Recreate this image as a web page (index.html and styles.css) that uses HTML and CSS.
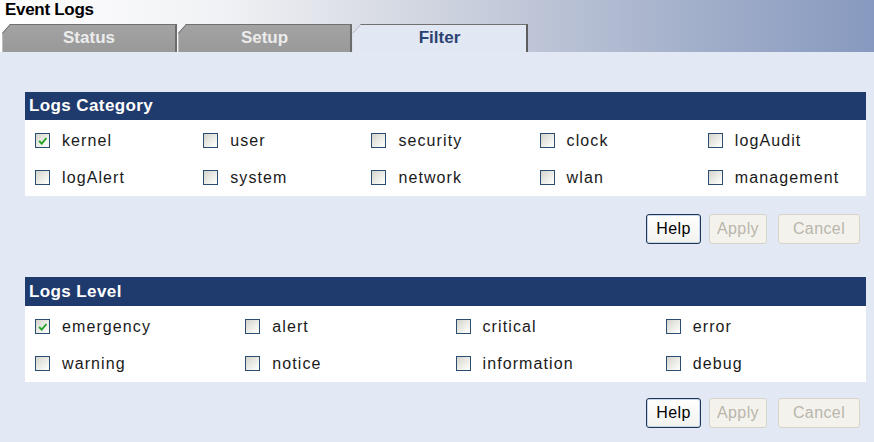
FILE: index.html
```html
<!DOCTYPE html>
<html>
<head>
<meta charset="utf-8">
<title>Event Logs</title>
<link rel="stylesheet" href="styles.css">
</head>
<body>
<header class="header">
  <div class="title">Event Logs</div>
  <nav class="tabs">
    <div class="tab">Status</div>
    <div class="tab tab-mid">Setup</div>
    <div class="tab active">Filter</div>
  </nav>
</header>
<main class="content">
  <section class="panel">
    <div class="panel-head">Logs Category</div>
    <div class="panel-body cols5">
      <label class="opt"><span class="cb checked"><svg viewBox="0 0 14 14" width="12" height="12"><path d="M2.5 7 L5.5 10 L11 3.5" fill="none" stroke="#23a323" stroke-width="2.2"/></svg></span>kernel</label>
      <label class="opt"><span class="cb"></span>user</label>
      <label class="opt"><span class="cb"></span>security</label>
      <label class="opt"><span class="cb"></span>clock</label>
      <label class="opt"><span class="cb"></span>logAudit</label>
      <label class="opt"><span class="cb"></span>logAlert</label>
      <label class="opt"><span class="cb"></span>system</label>
      <label class="opt"><span class="cb"></span>network</label>
      <label class="opt"><span class="cb"></span>wlan</label>
      <label class="opt"><span class="cb"></span>management</label>
    </div>
  </section>
  <div class="actions">
    <button class="btn">Help</button>
    <button class="btn disabled">Apply</button>
    <button class="btn disabled cancel">Cancel</button>
  </div>

  <section class="panel panel-second">
    <div class="panel-head">Logs Level</div>
    <div class="panel-body cols4">
      <label class="opt"><span class="cb checked"><svg viewBox="0 0 14 14" width="12" height="12"><path d="M2.5 7 L5.5 10 L11 3.5" fill="none" stroke="#23a323" stroke-width="2.2"/></svg></span>emergency</label>
      <label class="opt"><span class="cb"></span>alert</label>
      <label class="opt"><span class="cb"></span>critical</label>
      <label class="opt"><span class="cb"></span>error</label>
      <label class="opt"><span class="cb"></span>warning</label>
      <label class="opt"><span class="cb"></span>notice</label>
      <label class="opt"><span class="cb"></span>information</label>
      <label class="opt"><span class="cb"></span>debug</label>
    </div>
  </section>
  <div class="actions">
    <button class="btn">Help</button>
    <button class="btn disabled">Apply</button>
    <button class="btn disabled cancel">Cancel</button>
  </div>
</main>
</body>
</html>
```

FILE: styles.css
```css
html, body {
  margin: 0;
  padding: 0;
}
body {
  width: 874px;
  height: 442px;
  overflow: hidden;
  background: #e3e9f4;
  font-family: "Liberation Sans", Arial, sans-serif;
  color: #000;
}
.header {
  height: 52px;
  background: linear-gradient(to right, #ffffff 0%, #f1f2f5 25%, #d6dae3 45%, #bcc4d6 62%, #a2afca 80%, #8799bf 100%);
}
.title {
  height: 24px;
  box-sizing: border-box;
  padding: 0 0 0 5px;
  font-size: 17px;
  line-height: 20px;
  font-weight: bold;
  letter-spacing: -0.3px;
}
.tabs {
  display: flex;
  gap: 1px;
  padding-left: 2px;
  height: 28px;
}
.tab {
  position: relative;
  width: 175px;
  height: 28px;
  box-sizing: border-box;
  background: linear-gradient(to bottom, #a3a3a3, #999999);
  border-top: 1px solid #707070;
  border-right: 2px solid #6c6c6c;
  border-left: 1px solid #bdbdbd;
  clip-path: polygon(8px 0, 100% 0, 100% 100%, 0 100%, 0 9px);
  color: #ececec;
  font-size: 17px;
  font-weight: bold;
  line-height: 25px;
  text-align: center;
}
.tab::before {
  content: "";
  position: absolute;
  left: -3px;
  top: 3px;
  width: 13px;
  height: 1px;
  background: #707070;
  transform: rotate(-48deg);
}
.tab-mid {
  width: 174px;
}
.tab.active {
  background: #e1e7f3;
  color: #2b4271;
  border-left: none;
  border-right: 2px solid #5d5d5d;
}
.content {
  padding-top: 40px;
}
.panel {
  margin: 0 8px 0 25px;
  background: #ffffff;
}
.panel-second {
  margin-top: 33px;
}
.panel-head {
  height: 28px;
  box-sizing: border-box;
  padding-left: 4px;
  background: #1f3a6d;
  color: #ffffff;
  font-size: 17px;
  font-weight: bold;
  line-height: 28px;
  letter-spacing: 0.4px;
}
.panel-second .panel-head {
  height: 29px;
  line-height: 29px;
}
.panel-body {
  display: grid;
  grid-auto-rows: 37px;
  padding-top: 2px;
}
.cols5 {
  grid-template-columns: repeat(5, 1fr);
}
.cols4 {
  grid-template-columns: repeat(4, 1fr);
}
.opt {
  display: flex;
  align-items: center;
  padding-left: 10px;
  font-size: 16px;
  letter-spacing: 1.1px;
  color: #1a1a1a;
}
.cb {
  width: 15px;
  height: 15px;
  box-sizing: border-box;
  margin-right: 12px;
  border: 1px solid #2c4d72;
  background: linear-gradient(135deg, #d3d3cb 0%, #e9e9e3 45%, #ffffff 100%);
  display: flex;
  align-items: center;
  justify-content: center;
  flex: none;
}
.actions {
  display: flex;
  justify-content: flex-end;
  margin: 18px 14px 0 0;
}
.panel-second + .actions {
  margin-top: 16px;
}
.btn {
  height: 30px;
  box-sizing: border-box;
  width: 55px;
  margin: 0;
  padding: 0;
  border: 1px solid #1d3556;
  border-radius: 3px;
  background: linear-gradient(to bottom, #ffffff, #f1f1ee);
  box-shadow: inset 0 0 0 1px #c9d6ea;
  font-family: "Liberation Sans", Arial, sans-serif;
  font-size: 16px;
  letter-spacing: 0.4px;
  color: #000;
}
.btn.disabled {
  width: 58px;
  margin-left: 8px;
  border: 1px solid #d6d3c8;
  background: #f4f2ec;
  box-shadow: none;
  color: #b9b6ac;
}
.btn.cancel {
  width: 82px;
  margin-left: 11px;
}
```
